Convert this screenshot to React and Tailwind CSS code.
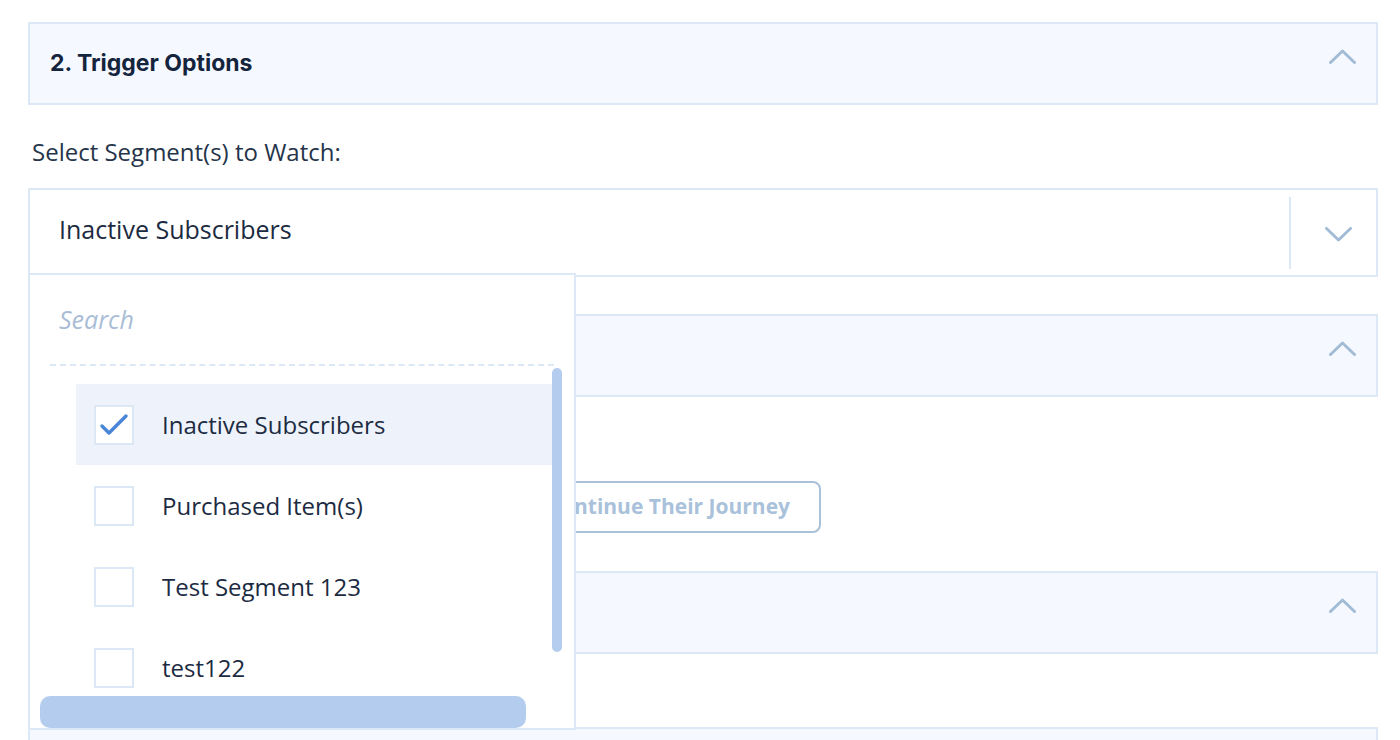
import React from "react";

const Chevron = ({ up }) => (
  <svg width="27" height="15" viewBox="0 0 27 15" fill="none">
    <path
      d={up ? "M1.5 13.5 L13.5 2 L25.5 13.5" : "M1.5 1.5 L13.5 13 L25.5 1.5"}
      stroke="#a3bcd6"
      strokeWidth="3"
      strokeLinecap="round"
      strokeLinejoin="round"
    />
  </svg>
);

const Header = ({ title, className = "" }) => (
  <div
    className={`flex items-center justify-between h-[83px] border-2 border-[#dde8f7] bg-[#f5f9ff] pl-[20px] pr-[20px] ${className}`}
  >
    <span
      className="text-[23px] font-bold text-[#15243d]"
      style={{ fontFamily: "Inter, 'Noto Sans', sans-serif" }}
    >
      {title}
    </span>
    <div className="mb-[14px]">
      <Chevron up />
    </div>
  </div>
);

const Checkbox = ({ checked }) => (
  <div className="w-[40px] h-[40px] shrink-0 border-2 border-[#dde8f7] bg-white flex items-center justify-center">
    {checked && (
      <svg width="30" height="24" viewBox="0 0 30 24" fill="none">
        <path
          d="M3 13 L10 20 L27 3"
          stroke="#4a86d8"
          strokeWidth="3.5"
          strokeLinecap="round"
          strokeLinejoin="round"
        />
      </svg>
    )}
  </div>
);

const items = [
  { label: "Inactive Subscribers", checked: true },
  { label: "Purchased Item(s)" },
  { label: "Test Segment 123" },
  { label: "test122" },
];

export default function App() {
  return (
    <div
      className="w-[1400px] h-[740px] overflow-hidden bg-white pl-[28px] pr-[22px] pt-[22px] text-[#1c2b42]"
      style={{ fontFamily: "'Open Sans', 'Noto Sans', sans-serif" }}
    >
      <Header title="2. Trigger Options" />

      <div className="mt-[33px] pl-[4px] text-[24px] leading-[28px] text-[#25344a]">
        Select Segment(s) to Watch:
      </div>

      <div className="relative mt-[22px]">
        <div className="flex items-center h-[89px] border-2 border-[#dde8f7] bg-white">
          <div className="flex-1 pl-[29px] pb-[6px] text-[25px] text-[#1c2b42]">
            Inactive Subscribers
          </div>
          <div className="w-[2px] h-[72px] bg-[#dde8f7]" />
          <div className="w-[85px] flex items-center justify-center pl-[10px] pt-[4px]">
            <Chevron />
          </div>
        </div>

        <div className="absolute left-0 top-[85px] z-10 w-[548px] h-[457px] border-2 border-[#dde8f7] bg-white overflow-hidden">
          <div className="h-[89px] pl-[29px] pt-[25px] text-[25px] italic text-[#aabdd6] leading-[38px]">
            Search
          </div>
          <div className="mx-[20px] border-t-2 border-dashed border-[#dde8f7]" />
          <div className="pt-[18px] pl-[46px] pr-[22px]">
            {items.map((it) => (
              <div
                key={it.label}
                className={`flex items-center h-[81px] pl-[18px] gap-[28px] ${
                  it.checked ? "bg-[#eef3fb]" : ""
                }`}
              >
                <Checkbox checked={it.checked} />
                <span className="text-[24px] text-[#1c2b42]">{it.label}</span>
              </div>
            ))}
          </div>
          <div className="absolute left-[522px] top-[93px] w-[10px] h-[284px] rounded-full bg-[#b4cdee]" />
          <div className="absolute left-[10px] top-[421px] w-[486px] h-[32px] rounded-[10px] bg-[#b4cdee]" />
        </div>
      </div>

      <Header title="3. Exit Options" className="mt-[37px]" />

      <div className="mt-[84px] w-[793px] flex justify-end">
        <div className="h-[52px] pl-[30px] pr-[29px] flex items-center border-2 border-[#a9c1da] rounded-[8px] text-[21px] font-bold text-[#a9c1da]">
          Let Them Continue Their Journey
        </div>
      </div>

      <Header title="4. Goal Options" className="mt-[38px]" />

      <div className="mt-[73px] h-[83px] border-2 border-[#dde8f7] bg-[#f5f9ff]" />
    </div>
  );
}
